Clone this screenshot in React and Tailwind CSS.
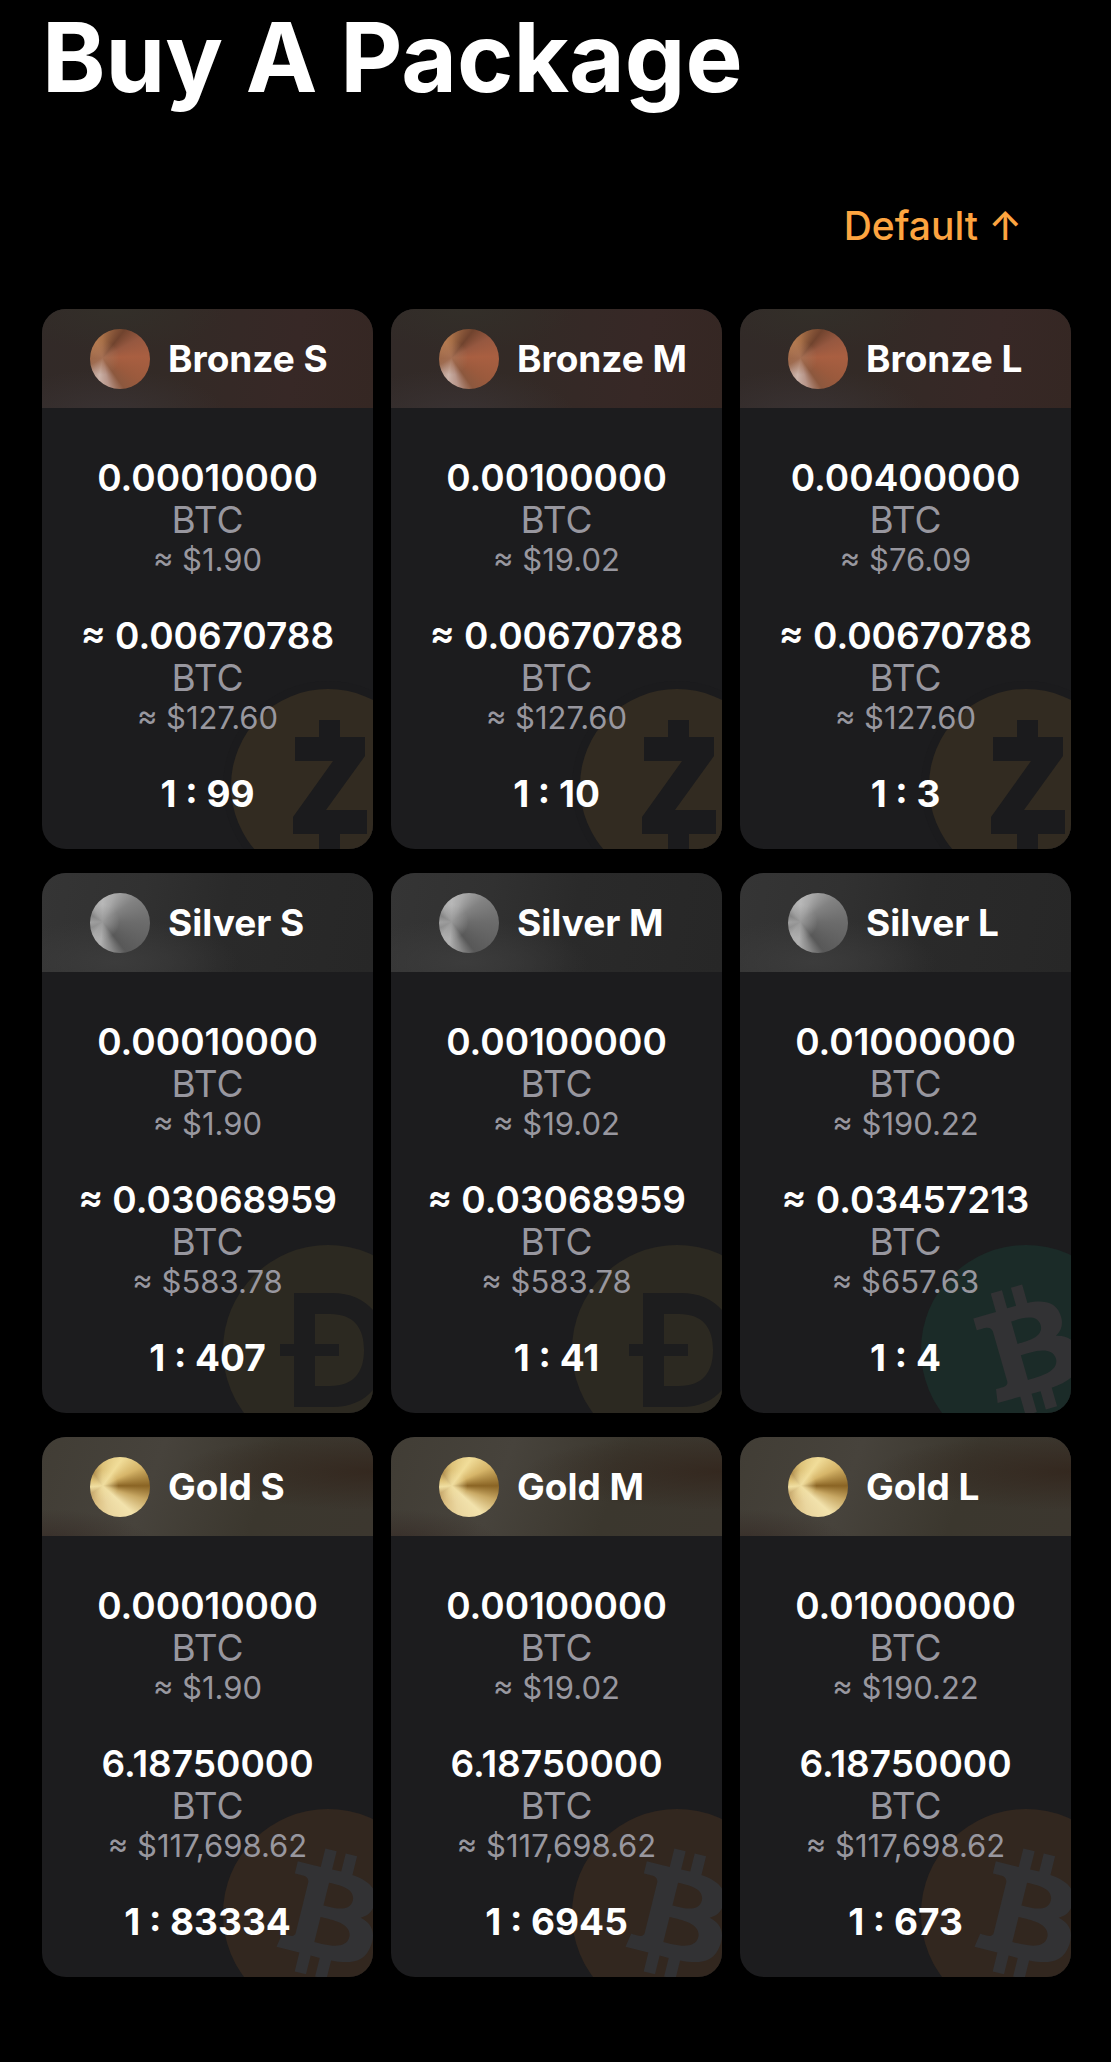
import clsx from 'clsx';

const tiers = {
  bronze: {
    header:
      'bg-[radial-gradient(ellipse_at_20%_110%,#3a3334_0%,transparent_32%),radial-gradient(ellipse_at_22%_0%,#332f29_0%,transparent_30%),linear-gradient(100deg,#322a28_0%,#332a26_40%,#372826_75%,#352723_100%)]',
    coin: 'bg-[radial-gradient(circle_at_21%_48%,#a36e52_0%,transparent_30%),conic-gradient(from_0deg_at_21%_48%,#a87048_0deg,#70432e_38deg,#965840_62deg,#a95f41_88deg,#9b5a3d_120deg,#8c583e_145deg,#b8968a_168deg,#ccb4aa_190deg,#b8988a_212deg,#9b6b50_240deg,#9b6545_265deg,#b0774f_310deg,#b47a50_340deg,#a87048_360deg)]',
  },
  silver: {
    header:
      'bg-[radial-gradient(ellipse_at_22%_90%,#3c3c3c_0%,transparent_34%),linear-gradient(100deg,#353535_0%,#313131_30%,#2a2a2a_55%,#272727_100%)]',
    coin: 'bg-[radial-gradient(circle_at_21%_48%,#989898_0%,transparent_30%),conic-gradient(from_0deg_at_21%_48%,#b8b8b8_0deg,#a8a8a8_24deg,#828282_56deg,#6c6c6c_90deg,#606060_120deg,#585858_142deg,#888888_162deg,#b0b0b0_185deg,#acacac_215deg,#8c8c8c_242deg,#a4a4a4_268deg,#7c7c7c_300deg,#a8a8a8_328deg,#b8b8b8_360deg)]',
  },
  gold: {
    header:
      'bg-[radial-gradient(ellipse_at_0%_110%,#372d28_0%,transparent_24%),radial-gradient(ellipse_at_100%_35%,#34281f_0%,transparent_42%),linear-gradient(110deg,#413d35_0%,#47433c_34%,#3b372e_66%,#3c372f_100%)]',
    coin: 'bg-[radial-gradient(circle_at_21%_48%,#efdda0_0%,transparent_28%),conic-gradient(from_0deg_at_21%_48%,#ddc279_0deg,#f1dd99_36deg,#d6b569_64deg,#8a6424_90deg,#c8a864_108deg,#f2e2ac_132deg,#ead69f_165deg,#dbbf82_200deg,#bf9e62_236deg,#f0dfa2_265deg,#d8b868_296deg,#b08d4c_325deg,#ddc279_360deg)]',
  },
};

const packages = [
  { name: 'Bronze S', tier: 'bronze', coin: 'zec', price: '0.00010000', priceUsd: '$1.90', reward: '≈ 0.00670788', rewardUsd: '$127.60', odds: 99 },
  { name: 'Bronze M', tier: 'bronze', coin: 'zec', price: '0.00100000', priceUsd: '$19.02', reward: '≈ 0.00670788', rewardUsd: '$127.60', odds: 10 },
  { name: 'Bronze L', tier: 'bronze', coin: 'zec', price: '0.00400000', priceUsd: '$76.09', reward: '≈ 0.00670788', rewardUsd: '$127.60', odds: 3 },
  { name: 'Silver S', tier: 'silver', coin: 'doge', price: '0.00010000', priceUsd: '$1.90', reward: '≈ 0.03068959', rewardUsd: '$583.78', odds: 407 },
  { name: 'Silver M', tier: 'silver', coin: 'doge', price: '0.00100000', priceUsd: '$19.02', reward: '≈ 0.03068959', rewardUsd: '$583.78', odds: 41 },
  { name: 'Silver L', tier: 'silver', coin: 'bch', price: '0.01000000', priceUsd: '$190.22', reward: '≈ 0.03457213', rewardUsd: '$657.63', odds: 4 },
  { name: 'Gold S', tier: 'gold', coin: 'btc', price: '0.00010000', priceUsd: '$1.90', reward: '6.18750000', rewardUsd: '$117,698.62', odds: 83334 },
  { name: 'Gold M', tier: 'gold', coin: 'btc', price: '0.00100000', priceUsd: '$19.02', reward: '6.18750000', rewardUsd: '$117,698.62', odds: 6945 },
  { name: 'Gold L', tier: 'gold', coin: 'btc', price: '0.01000000', priceUsd: '$190.22', reward: '6.18750000', rewardUsd: '$117,698.62', odds: 673 },
];

const ZecLogo = (props) => (
  <svg viewBox="0 0 210 210" {...props}>
    <circle cx="105" cy="105" r="105" fill="#1b1b1d" />
    <circle cx="105" cy="105" r="97" fill="#322b21" />
    <path fill="#1b1b1d" d="M96 39h21v17h25v19l-39 54h41v24h-27v17H96v-17H70v-17l40-56H72V56h24z" />
  </svg>
);

const DogeLogo = (props) => (
  <svg viewBox="0 0 210 210" {...props}>
    <circle cx="105" cy="105" r="105" fill="#2c2921" />
    <path
      fill="#1d1d1e"
      fillRule="evenodd"
      d="M71 48h38c35 0 54 24 54 57s-19 57-54 57H71zM92 69v72h15c24 0 34-14 34-36s-10-36-34-36z"
    />
    <path fill="#1d1d1e" d="M57 99h59v12H57z" />
  </svg>
);

const BchLogo = (props) => (
  <svg viewBox="0 0 32 32" {...props}>
    <circle cx="16" cy="16" r="16" fill="#1b2b28" />
    <path
      fill="#323234"
      d="M21.207 10.534c-.776-1.972-2.722-2.15-4.988-1.71l-.807-2.813-1.712.491.786 2.74c-.45.128-.908.27-1.363.41l-.79-2.758-1.711.49.805 2.813c-.368.114-.73.226-1.085.328l-.003-.01-2.362.677.525 1.83s1.258-.388 1.243-.358c.694-.199 1.035.139 1.2.468l.92 3.204c.047-.013.11-.029.184-.04l-.181.052 1.287 4.49c.032.227.004.612-.48.752.027.013-1.246.356-1.246.356l.247 2.143 2.228-.64c.415-.117.825-.227 1.226-.34l.817 2.845 1.71-.49-.807-2.815a65.74 65.74 0 001.372-.38l.802 2.803 1.713-.491-.814-2.84c2.831-.991 4.638-2.294 4.113-5.07-.422-2.234-1.724-2.912-3.471-2.836.848-.79 1.213-1.858.642-3.3zm-.65 6.77c.61 2.127-3.1 2.929-4.26 3.263l-1.081-3.77c1.16-.333 4.704-1.71 5.34.508zm-2.322-5.09c.554 1.935-2.547 2.58-3.514 2.857l-.98-3.419c.966-.277 3.915-1.455 4.494.563z"
    />
  </svg>
);

const BtcLogo = (props) => (
  <svg viewBox="0 0 32 32" {...props}>
    <circle cx="16" cy="16" r="16" fill="#32271f" />
    <path
      fill="#323234"
      d="M23.189 14.02c.314-2.096-1.283-3.223-3.465-3.975l.708-2.84-1.728-.43-.69 2.765c-.454-.114-.92-.22-1.385-.326l.695-2.783L15.596 6l-.708 2.839c-.376-.086-.746-.17-1.104-.26l.002-.009-2.384-.595-.46 1.846s1.283.294 1.256.312c.7.175.826.638.805 1.006l-.806 3.235c.048.012.11.03.18.057l-.183-.045-1.13 4.532c-.086.212-.303.531-.793.41.018.025-1.256-.313-1.256-.313l-.858 1.978 2.25.561c.418.105.828.215 1.231.318l-.715 2.872 1.727.43.708-2.84c.472.127.93.245 1.378.357l-.706 2.828 1.728.43.715-2.866c2.948.558 5.164.333 6.097-2.333.752-2.146-.037-3.385-1.588-4.192 1.13-.26 1.98-1.003 2.207-2.538zm-3.95 5.538c-.533 2.147-4.148.986-5.32.695l.95-3.805c1.172.293 4.929.872 4.37 3.11zm.535-5.569c-.487 1.953-3.495.96-4.47.717l.86-3.45c.975.243 4.118.696 3.61 2.733z"
    />
  </svg>
);

const logos = { zec: ZecLogo, doge: DogeLogo, bch: BchLogo, btc: BtcLogo };

const Amount = ({ value, usd }) => (
  <div>
    <p className="text-[37px] leading-[42px] font-semibold">{value}</p>
    <p className="text-[37px] leading-[42px] text-[#98979f]">BTC</p>
    <p className="text-[31px] leading-[38px] text-[#98979f]">≈ {usd}</p>
  </div>
);

const PackageCard = ({ item }) => {
  const tier = tiers[item.tier];
  const Logo = logos[item.coin];

  return (
    <article className="relative overflow-hidden rounded-3xl bg-[#1c1c1e]">
      <Logo className="absolute -right-[60px] -bottom-[42px] w-[210px] h-[210px]" aria-hidden="true" />
      <div className={clsx('flex items-center gap-[18px] h-[99px] pl-12', tier.header)}>
        <span className={clsx('w-[60px] h-[60px] rounded-full shrink-0', tier.coin)} />
        <h2 className="text-[37px] leading-[42px] font-bold whitespace-nowrap">{item.name}</h2>
      </div>
      <div className="relative flex flex-col gap-9 pt-[49px] pb-[34px] text-center whitespace-nowrap">
        <Amount value={item.price} usd={item.priceUsd} />
        <Amount value={item.reward} usd={item.rewardUsd} />
        <p className="text-[37px] leading-[42px] font-bold">1 : {item.odds}</p>
      </div>
    </article>
  );
};

const App = () => (
  <main className="min-h-screen bg-black pl-[42px] pr-10 pb-[85px] font-['Inter',sans-serif] text-white">
    <h1 className="text-8xl leading-[114px] font-bold">Buy A Package</h1>

    {/* Sorting */}
    <div className="flex justify-end mt-[88px] pr-[49px]">
      <button type="button" className="text-[39px] leading-[48px] font-medium text-[#fda440]">
        Default ↑
      </button>
    </div>

    {/* Packages */}
    <div className="grid grid-cols-3 gap-x-[18px] gap-y-6 mt-[59px]">
      {packages.map((item) => (
        <PackageCard key={item.name} item={item} />
      ))}
    </div>
  </main>
);

export default App;
